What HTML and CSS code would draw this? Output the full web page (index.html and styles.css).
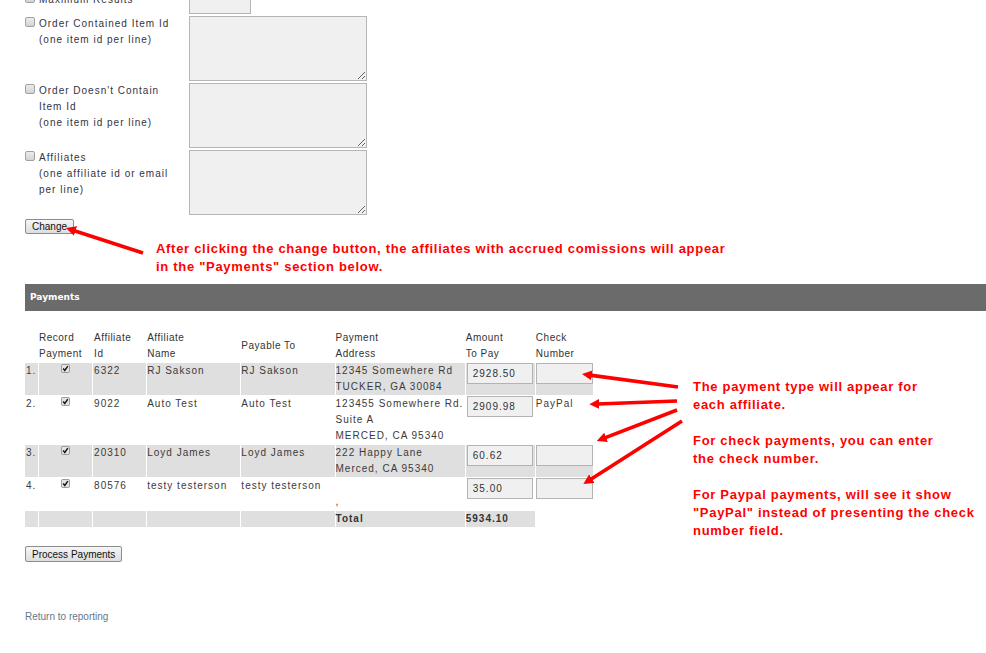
FILE: index.html
```html
<!DOCTYPE html>
<html>
<head>
<meta charset="utf-8">
<title>Affiliate Payments</title>
<link rel="stylesheet" href="styles.css">
</head>
<body>
<div class="page">
  <div class="filters">
    <div class="flabel"><span class="cb"></span><span class="ftext">Maximum Results</span></div>
    <div><input class="num" type="text"></div>
    <div class="flabel"><span class="cb"></span><span class="ftext">Order Contained Item Id<br>(one item id per line)</span></div>
    <div><textarea class="ta"></textarea></div>
    <div class="flabel"><span class="cb"></span><span class="ftext">Order Doesn't Contain Item Id<br>(one item id per line)</span></div>
    <div><textarea class="ta"></textarea></div>
    <div class="flabel"><span class="cb"></span><span class="ftext">Affiliates<br>(one affiliate id or email per line)</span></div>
    <div><textarea class="ta"></textarea></div>
  </div>
  <button class="btn" type="button">Change</button>
  <p class="note">After clicking the change button, the affiliates with accrued comissions will appear<br>in the "Payments" section below.</p>
  <div class="bar">Payments</div>
  <table class="pay">
    <colgroup>
      <col class="c0"><col class="c1"><col class="c2"><col class="c3"><col class="c4"><col class="c5"><col class="c6"><col class="c7">
    </colgroup>
    <thead>
      <tr>
        <th></th><th>Record<br>Payment</th><th class="p1">Affiliate<br>Id</th><th>Affiliate<br>Name</th><th>Payable To</th><th>Payment<br>Address</th><th>Amount<br>To Pay</th><th>Check<br>Number</th>
      </tr>
    </thead>
    <tbody>
      <tr class="odd">
        <td class="n">1.</td>
        <td class="ck"><svg class="box" viewBox="0 0 10 10"><rect x="0.5" y="0.5" width="9" height="9" rx="1.5" class="boxr"/><path d="M2.4 5.1 L4.2 7.2 L7.6 2.4" class="tick"/></svg></td>
        <td class="p1">6322</td><td>RJ Sakson</td><td>RJ Sakson</td>
        <td>12345 Somewhere Rd<br>TUCKER, GA 30084</td>
        <td><input class="amt" type="text" value="2928.50"></td>
        <td><input class="chk" type="text"></td>
      </tr>
      <tr>
        <td class="n">2.</td>
        <td class="ck"><svg class="box" viewBox="0 0 10 10"><rect x="0.5" y="0.5" width="9" height="9" rx="1.5" class="boxr"/><path d="M2.4 5.1 L4.2 7.2 L7.6 2.4" class="tick"/></svg></td>
        <td class="p1">9022</td><td>Auto Test</td><td>Auto Test</td>
        <td>123455 Somewhere Rd.<br>Suite A<br>MERCED, CA 95340</td>
        <td><input class="amt" type="text" value="2909.98"></td>
        <td>PayPal</td>
      </tr>
      <tr class="odd">
        <td class="n">3.</td>
        <td class="ck"><svg class="box" viewBox="0 0 10 10"><rect x="0.5" y="0.5" width="9" height="9" rx="1.5" class="boxr"/><path d="M2.4 5.1 L4.2 7.2 L7.6 2.4" class="tick"/></svg></td>
        <td class="p1">20310</td><td>Loyd James</td><td>Loyd James</td>
        <td>222 Happy Lane<br>Merced, CA 95340</td>
        <td><input class="amt" type="text" value="60.62"></td>
        <td><input class="chk" type="text"></td>
      </tr>
      <tr>
        <td class="n">4.</td>
        <td class="ck"><svg class="box" viewBox="0 0 10 10"><rect x="0.5" y="0.5" width="9" height="9" rx="1.5" class="boxr"/><path d="M2.4 5.1 L4.2 7.2 L7.6 2.4" class="tick"/></svg></td>
        <td class="p1">80576</td><td>testy testerson</td><td>testy testerson</td>
        <td><br>,</td>
        <td><input class="amt" type="text" value="35.00"></td>
        <td><input class="chk" type="text"></td>
      </tr>
      <tr class="odd total">
        <td></td><td></td><td></td><td></td><td></td><td>Total</td><td>5934.10</td>
      </tr>
    </tbody>
  </table>
  <button class="btn btn-process" type="button">Process Payments</button>
  <a class="back" href="#">Return to reporting</a>
</div>

<p class="callout">The payment type will appear for<br>each affiliate.<br><br>For check payments, you can enter<br>the check number.<br><br>For Paypal payments, will see it show<br>"PayPal" instead of presenting the check<br>number field.</p>

<svg class="arrows" width="986" height="653" viewBox="0 0 986 653">
  <defs>
    <marker id="head" viewBox="0 0 10 10" refX="2" refY="5" markerWidth="10" markerHeight="10" markerUnits="userSpaceOnUse" orient="auto">
      <path d="M0 0 L10 5 L0 10 Z" fill="#ff0000"/>
    </marker>
  </defs>
  <line x1="143" y1="253" x2="73.6" y2="230.5" class="arrow"/>
  <line x1="678" y1="387" x2="589.9" y2="375.1" class="arrow"/>
  <line x1="677" y1="401" x2="597.3" y2="404" class="arrow"/>
  <line x1="677" y1="410" x2="604.2" y2="438.1" class="arrow"/>
  <line x1="682" y1="421" x2="590.1" y2="479.7" class="arrow"/>
</svg>
</body>
</html>
```

FILE: styles.css
```css
html, body {
  margin: 0;
  padding: 0;
  background: #ffffff;
}

body {
  position: relative;
  width: 986px;
  height: 653px;
  overflow: hidden;
  font-family: "Liberation Sans", Arial, sans-serif;
  color: #333333;
}

.page {
  padding-left: 25px;
}

/* ---------- filter form ---------- */
.filters {
  display: grid;
  grid-template-columns: 164px 178px;
  grid-template-rows: 22px 65px 65px 65px;
  row-gap: 2px;
  margin-top: -8px;
}

.flabel {
  display: flex;
  align-items: flex-start;
  gap: 4px;
}

.cb {
  flex: none;
  width: 10px;
  height: 10px;
  margin-top: 1px;
  box-sizing: border-box;
  border: 1px solid #a2a2a2;
  border-radius: 2px;
  background: linear-gradient(#ececec, #d3d3d3);
}

.ftext {
  width: 140px;
  font-size: 10px;
  line-height: 16px;
  letter-spacing: 1px;
  color: #33333f;
}

.num {
  display: block;
  box-sizing: border-box;
  width: 62px;
  height: 22px;
  margin: 0;
  border: 1px solid #b5b5b5;
  background: #f0f0f0;
}

.ta {
  display: block;
  box-sizing: border-box;
  width: 178px;
  height: 65px;
  margin: 0;
  padding: 2px;
  border: 1px solid #b5b5b5;
  background: #f0f0f0;
  font-family: "Liberation Sans", Arial, sans-serif;
  font-size: 10px;
}

/* ---------- buttons ---------- */
.btn {
  display: block;
  box-sizing: border-box;
  height: 15px;
  margin: 4px 0 0;
  padding: 0 6px;
  border: 1px solid #8c8c8c;
  border-radius: 2px;
  background: linear-gradient(#f6f6f6, #dddddd);
  font-family: "Liberation Sans", Arial, sans-serif;
  font-size: 10px;
  line-height: 13px;
  color: #111111;
}

.btn-process {
  height: 16px;
  margin-top: 18px;
}

/* ---------- annotation ---------- */
.note {
  margin: 6px 0 8px 131px;
  font-size: 13px;
  line-height: 18px;
  font-weight: bold;
  letter-spacing: 0.7px;
  color: #ff0000;
  white-space: nowrap;
}

.callout {
  position: absolute;
  left: 693px;
  top: 378px;
  margin: 0;
  font-size: 13px;
  line-height: 18px;
  font-weight: bold;
  letter-spacing: 0.7px;
  color: #ff0000;
  white-space: nowrap;
}

.arrows {
  position: absolute;
  left: 0;
  top: 0;
  pointer-events: none;
}

.arrow {
  stroke: #ff0000;
  stroke-width: 3.6;
  marker-end: url(#head);
}

/* ---------- payments bar ---------- */
.bar {
  height: 27px;
  padding-left: 5px;
  background: #6b6b6b;
  color: #ffffff;
  font-family: "DejaVu Sans", Verdana, sans-serif;
  font-weight: bold;
  font-size: 9px;
  line-height: 27px;
}

/* ---------- table ---------- */
.pay {
  table-layout: fixed;
  width: 570px;
  margin: 18px 0 0 -1px;
  border-collapse: separate;
  border-spacing: 1px;
  font-size: 10px;
  line-height: 16px;
}

.c0 { width: 13px; }
.c1 { width: 53px; }
.c2 { width: 53px; }
.c3 { width: 93px; }
.c4 { width: 93px; }
.c5 { width: 129px; }
.c6 { width: 69px; }
.c7 { width: 57px; }

.pay th {
  padding: 0;
  text-align: left;
  vertical-align: middle;
  font-weight: normal;
  letter-spacing: 0.5px;
  color: #333333;
  white-space: nowrap;
}

.pay td {
  padding: 0;
  vertical-align: top;
  letter-spacing: 1px;
  color: #3a3a3a;
  white-space: nowrap;
}

.pay td.n {
  padding-left: 1px;
}

.pay .p1 {
  padding-left: 1px;
}

.pay tr.odd td {
  background: #dfdfdf;
}

.pay tr.total td {
  font-weight: bold;
  color: #333333;
}

.ck {
  text-align: center;
}

.box {
  display: inline-block;
  width: 9px;
  height: 9px;
  margin-top: 1px;
  vertical-align: top;
}

.boxr {
  fill: #e4e4e4;
  stroke: #8e8e8e;
  stroke-width: 1;
}

.tick {
  fill: none;
  stroke: #1a1a1a;
  stroke-width: 1.7;
}

.amt,
.chk {
  display: block;
  box-sizing: border-box;
  height: 21px;
  margin: 0;
  padding: 0 5px;
  border: 1px solid #b3b3b3;
  background: #f0f0f0;
  font-family: "Liberation Sans", Arial, sans-serif;
  font-size: 10px;
  letter-spacing: 1px;
  color: #333333;
}

.amt {
  width: 66px;
  margin-left: 1px;
}

.chk {
  width: 57px;
}

/* ---------- footer link ---------- */
.back {
  display: block;
  margin-top: 47px;
  font-size: 10px;
  line-height: 16px;
  color: #66778a;
  text-decoration: none;
}
```
